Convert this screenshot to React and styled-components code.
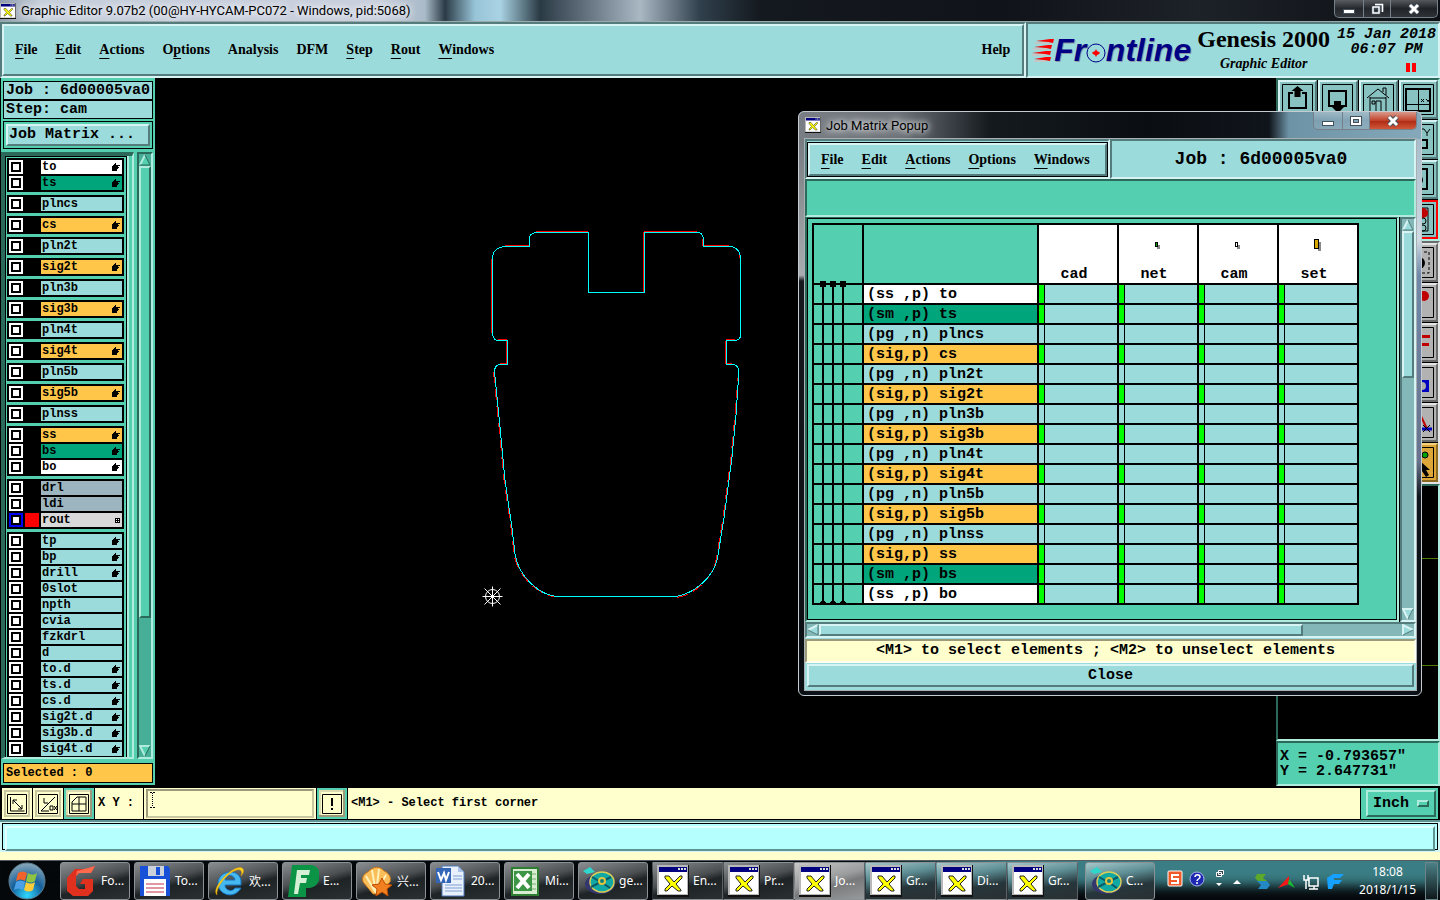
import { useState } from "react";
import styled, { createGlobalStyle, css } from "styled-components";

const GlobalStyle = createGlobalStyle`
  * {
    box-sizing: border-box;
  }
  body {
    margin: 0;
    background: #000;
    color: #000;
    font-family: "Liberation Mono", monospace;
    font-weight: bold;
  }
  button, input, select {
    font: inherit;
    color: inherit;
    margin: 0;
    padding: 0;
    border: none;
    border-radius: 0;
    background: none;
  }
`;

const aqua = "#9cdbdb";
const green = "#54cfb0";
const amber = "#ffc64a";
const mask = "#00a57b";
const cream = "#ffffce";

const tones = {
  aqua: ["#d8f3f3", "#557c7c"],
  green: ["#b0ecdd", "#2b6a5a"],
  cream: ["#fffff0", "#9c9a7b"],
  cyan: ["#e0ffff", "#5f9494"],
  gray: ["#e4e4e4", "#6b6b6b"],
  gold: ["#f5cf7c", "#8a6a20"],
  red: ["#ff0000", "#ff0000"],
};

const raised = (tone, size = 2) => css`
  border: ${size}px solid;
  border-color: ${tones[tone][0]} ${tones[tone][1]} ${tones[tone][1]} ${tones[tone][0]};
`;

const sunken = (tone, size = 2) => css`
  border: ${size}px solid;
  border-color: ${tones[tone][1]} ${tones[tone][0]} ${tones[tone][0]} ${tones[tone][1]};
`;

const layerGroups = [
  [["to", "#fff", "hand"], ["ts", mask, "hand"]],
  [["plncs", aqua]],
  [["cs", amber, "hand"]],
  [["pln2t", aqua]],
  [["sig2t", amber, "hand"]],
  [["pln3b", aqua]],
  [["sig3b", amber, "hand"]],
  [["pln4t", aqua]],
  [["sig4t", amber, "hand"]],
  [["pln5b", aqua]],
  [["sig5b", amber, "hand"]],
  [["plnss", aqua]],
  [["ss", amber, "hand"], ["bs", mask, "hand"], ["bo", "#fff", "hand"]],
  [["drl", "#9cb5bf"], ["ldi", "#9cb5bf"], ["rout", "#d9d9d9", "grid"]],
  [
    ["tp", aqua, "hand"],
    ["bp", aqua, "hand"],
    ["drill", aqua, "hand"],
    ["0slot", aqua],
    ["npth", aqua],
    ["cvia", aqua],
    ["fzkdrl", aqua],
    ["d", aqua],
    ["to.d", aqua, "hand"],
    ["ts.d", aqua, "hand"],
    ["cs.d", aqua, "hand"],
    ["sig2t.d", aqua, "hand"],
    ["sig3b.d", aqua, "hand"],
    ["sig4t.d", aqua, "hand"],
  ],
];

const matrixRows = [
  ["(ss ,p) to", "#fff", true],
  ["(sm ,p) ts", mask, true],
  ["(pg ,n) plncs", aqua, false],
  ["(sig,p) cs", amber, true],
  ["(pg ,n) pln2t", aqua, false],
  ["(sig,p) sig2t", amber, true],
  ["(pg ,n) pln3b", aqua, false],
  ["(sig,p) sig3b", amber, true],
  ["(pg ,n) pln4t", aqua, false],
  ["(sig,p) sig4t", amber, true],
  ["(pg ,n) pln5b", aqua, false],
  ["(sig,p) sig5b", amber, true],
  ["(pg ,n) plnss", aqua, false],
  ["(sig,p) ss", amber, true],
  ["(sm ,p) bs", mask, true],
  ["(ss ,p) bo", "#fff", true],
];

const steps = ["cad", "net", "cam", "set"];

const mainMenu = [
  ["", "F", "ile"],
  ["", "E", "dit"],
  ["", "A", "ctions"],
  ["O", "p", "tions"],
  ["Analysis", "", ""],
  ["DFM", "", ""],
  ["", "S", "tep"],
  ["", "R", "out"],
  ["", "W", "indows"],
];

const popupMenu = [
  ["", "F", "ile"],
  ["", "E", "dit"],
  ["", "A", "ctions"],
  ["", "O", "ptions"],
  ["", "W", "indows"],
];

/* ---------- icons ---------- */

const XIcon = ({ size }) => (
  <svg width={size} height={size} viewBox="0 0 32 32" aria-hidden="true">
    <rect width="32" height="32" fill="#111" />
    <rect width="31" height="30" fill="#b8b8b8" />
    <rect x="2" y="2" width="28" height="27" fill="#fff" />
    <rect x="2" y="2" width="28" height="5" fill="#000080" />
    <path d="M21 3h2v2h-2zM24 3h2v2h-2zM27 3h2v2h-2z" fill="#ddd" />
    <path d="M8 11h4l5 6 6-6h2v2l-6 6 5 6v1h-3l-6-5-5 5H8v-2l5-5-5-6z" fill="#ff0" stroke="#222" />
  </svg>
);

const HandIcon = () => (
  <svg width="8" height="8" viewBox="0 0 8 8" shapeRendering="crispEdges" aria-hidden="true">
    <path d="M3 0h1v2h4v1H6v1h1v1H6v1H5v2H0V3h1V2h1V1h1z" />
  </svg>
);

const GridIcon = () => (
  <svg width="5" height="5" viewBox="0 0 5 5" shapeRendering="crispEdges" aria-hidden="true">
    <path d="M0 0h5v5H0z" />
    <path d="M1 1h1v1H1zM3 1h1v1H3zM1 3h1v1H1zM3 3h1v1H3z" fill="#fff" />
  </svg>
);

const arrowShapes = {
  up: ["M6 1L11 11H1z", "M6 1L1 11", "M1 11H11L6 1"],
  down: ["M1 1H11L6 11z", "M6 11L1 1H11", "M11 1L6 11"],
  left: ["M1 6L11 1V11z", "M11 1L1 6", "M1 6L11 11V1"],
  right: ["M1 1L11 6L1 11z", "M1 11V1L11 6", "M11 6L1 11"],
};

const ScrollArrow = ({ dir, tone, fill }) => (
  <svg width="12" height="12" viewBox="0 0 12 12" aria-hidden="true">
    <path d={arrowShapes[dir][0]} fill={fill} />
    <path d={arrowShapes[dir][1]} fill="none" stroke={tones[tone][0]} strokeWidth="2" />
    <path d={arrowShapes[dir][2]} fill="none" stroke={tones[tone][1]} />
  </svg>
);

const SpeedLines = () => (
  <svg width="22" height="28" viewBox="0 0 22 28" aria-hidden="true">
    <path d="M4 5l14-2h4l-1 4-5-1zM2 11l14-2h4l-1 4-5-1zM0 17l14-2h5l-1 4-5-1zM2 23l12-2h5l-1 4-6-1z" fill="#f00" />
    <path d="M3 7h14M1 13h14M0 19h14M2 25h12" stroke="#e9b3b0" />
  </svg>
);

const WindowGlyph = ({ kind }) => (
  <svg width="14" height="12" viewBox="0 0 14 12" aria-hidden="true">
    {kind === "min" && <rect x="1.5" y="6.5" width="11" height="4" fill="#fff" stroke="#44505c" />}
    {kind === "max" && (
      <g fill="none">
        <rect x="3" y="3" width="8" height="6" stroke="#44505c" strokeWidth="4" />
        <rect x="3" y="3" width="8" height="6" stroke="#fff" strokeWidth="2" />
      </g>
    )}
    {kind === "restore" && (
      <g fill="none">
        <path d="M5 2h7v7M3 5h6v5H3z" stroke="#44505c" strokeWidth="3" />
        <path d="M5 1.500h7.500V9M3 4h6v6H3z" stroke="#fff" strokeWidth="1.500" />
      </g>
    )}
    {kind === "close" && (
      <g fill="none">
        <path d="M3 2l8 8M11 2l-8 8" stroke="#44505c" strokeWidth="5" />
        <path d="M3 2l8 8M11 2l-8 8" stroke="#fff" strokeWidth="3" />
      </g>
    )}
  </svg>
);

const toolArt = {
  board: (
    <>
      <path d="M11 9H7v15h17V9h-4" fill="none" stroke="#000" strokeWidth="2" />
      <path d="M15.500 2l6 5h-3v6h-6V7h-3z" />
    </>
  ),
  screen: (
    <>
      <path d="M7 7h17v15H7z" fill="none" stroke="#000" strokeWidth="2" />
      <path d="M12 17h7v6h3l-6 6-6-6h2z" />
    </>
  ),
  house: <path d="M4 14L15 5l11 9M7 13v15h16V13M7 14h16M13 28V17h5v11M9 17h3v3H9zM20 8V4h3v7" fill="none" stroke="#000" />,
  quad: (
    <>
      <path d="M3 5h24v22H3z" fill="none" stroke="#000" strokeWidth="2" />
      <path d="M15.500 5v22M3 20.500h24" stroke="#000" />
      <path d="M18 15l3 3M21 15l-3 3M23 15l2 2 2-2M25 17v1" fill="none" stroke="#000" />
    </>
  ),
  plug: (
    <>
      <path d="M18 5h3l3 4 3-4M24 9v3" fill="none" stroke="#000" />
      <path d="M10 16h14v8H10z" fill="none" stroke="#000" strokeWidth="2" />
    </>
  ),
  frame: (
    <>
      <path d="M6 5h18v20H6z" fill="none" stroke="#000" strokeWidth="2" />
      <circle cx="16" cy="16" r="4" />
    </>
  ),
  lights: (
    <>
      <path d="M10 4h15v23H10z" fill="none" stroke="#000" />
      <circle cx="20" cy="9" r="5" fill="#c00000" />
      <circle cx="20" cy="17" r="3" fill="none" stroke="#000" />
      <circle cx="20" cy="24" r="3" fill="none" stroke="#000" />
    </>
  ),
  dashed: (
    <>
      <path d="M6 5h20v21H6z" fill="none" stroke="#000" strokeDasharray="3 2" />
      <circle cx="16" cy="16" r="6" />
    </>
  ),
  dot: <circle cx="21" cy="9" r="5" fill="#c00000" />,
  bars: <path d="M12 8h15v3H12zM12 16h14v3H12z" fill="#c00000" />,
  box: (
    <>
      <path d="M14 13h12v12H14z" fill="#0000c0" />
      <circle cx="19" cy="19" r="4" fill="#aaa" />
    </>
  ),
  cross: (
    <>
      <path d="M16 5l8 17" stroke="#c00000" strokeWidth="2" />
      <path d="M12 22h17" stroke="#0000c0" strokeWidth="3" />
      <path d="M20 18l7 7M27 18l-7 7" stroke="#000" />
    </>
  ),
  pointer: (
    <>
      <circle cx="22" cy="8" r="3" fill="#00a000" stroke="#000" />
      <path d="M16 13l11 10h-4l3 5-3 2-4-6-3 3z" />
    </>
  ),
};

const ToolArt = ({ name }) => (
  <svg width="31" height="31" viewBox="0 0 31 31" aria-hidden="true">
    <path d="M.5 .5h30v30H.5z" fill="none" stroke="#000" />
    {toolArt[name]}
  </svg>
);

const promptArt = {
  corner: <path d="M3.500 3v14h14M6 6l9 9M6 10V6h4M15 11v4h-4" />,
  angle: <path d="M3 17L17 3M6 4v5h4M12 12h3v4h-3zM16 12l3 4M19 12l-3 4M3 17h8" />,
  grid: <path d="M8 3h9v14H3V8zM3 10h14M10 3v14" />,
  alert: <path d="M10 4v8M10 14v2" strokeWidth="2" />,
};

const PromptArt = ({ name }) => (
  <svg width="20" height="20" viewBox="0 0 20 20" fill="none" stroke="#000" aria-hidden="true">
    <path d="M.5 .5h19v19H.5z" />
    {promptArt[name]}
  </svg>
);

const appArt = {
  foxit: (
    <>
      <path d="M30 1l-4 7H14l-3 3v10l3 3h6v-5h-5l3-5h10v12l-5 5H8l-6-5V13l8-9h13z" fill="#e0301e" />
      <path d="M30 1l-4 7H14l-3 3 1-5z" fill="#ff6a4d" />
    </>
  ),
  floppy: (
    <>
      <path d="M1 1h28l2 3v27H1z" fill="#1850d8" />
      <path d="M9 1h16v10H9z" fill="#ccd2da" />
      <path d="M17 2h4v8h-4z" fill="#1850d8" />
      <path d="M5 14h22v17H5z" fill="#fff" />
      <path d="M7 19h18M7 23h18M7 27h18" stroke="#c3304a" />
    </>
  ),
  ie: (
    <>
      <path d="M28 20H12c0 6 8 7 10 3h6C21 35 5 30 5 18S25 2 28 15zM12 15h10c-1-6-9-6-10 0z" fill="#45b8f0" stroke="#1671bd" />
      <path d="M4 30C-3 24 20-1 29 3c3 2 1 6-1 8 1-3 1-5-1-6C20 2 2 21 4 30z" fill="#ffd320" stroke="#d89b00" strokeWidth=".5" />
    </>
  ),
  fp: (
    <>
      <path d="M5 0h20c12 2 10 22-3 23h-3v9H1z" fill="#0c9446" />
      <path d="M10 5h13l-1 5h-8v3h6l-1 5h-6l-2 11H7z" fill="#d6f0d6" />
    </>
  ),
  shell: (
    <>
      <path d="M2 17C0 9 6 8 8 6c5-5 11-5 15 0 3 1 8 5 6 11L18 29h-6z" fill="#f9bd5a" stroke="#c77418" />
      <path d="M15 28L5 11M15 28L11 5M15 28L18 4M15 28L25 10" stroke="#fff0b8" strokeWidth="2" />
      <path d="M21 13l3 6 7 1-5 4 1 7-6-4-6 4 1-7-5-4 7-1z" fill="#f08020" stroke="#c04c00" />
    </>
  ),
  word: (
    <>
      <path d="M7 1h16l6 6v24H7z" fill="#e8f0fb" stroke="#4f78b8" />
      <path d="M23 1v6h6z" fill="#a8c2e8" />
      <path d="M18 11h9M18 14h9M10 20h17M10 23h17M10 26h17" stroke="#7d9fd2" />
      <path d="M1 3h15v15H1z" fill="#3466b8" />
      <path d="M3 7l3 8 3-7 2 7 3-8" fill="none" stroke="#fff" strokeWidth="2" />
    </>
  ),
  excel: (
    <>
      <path d="M3 3h26v27H3z" fill="#d7ecd0" stroke="#2f7d32" strokeWidth="2" />
      <path d="M17 9h10M17 14h10M17 19h10M17 24h10" stroke="#78b070" />
      <path d="M5 6h18v20H5z" fill="#3c9645" />
      <path d="M8 9l12 14M20 9L8 23" stroke="#fff" strokeWidth="4" />
    </>
  ),
  genesis: (
    <>
      <ellipse cx="17" cy="19" rx="15" ry="10" fill="#34366e" />
      <ellipse cx="19" cy="17" rx="12" ry="10" fill="#12a8a4" stroke="#d9cf58" strokeWidth="1.500" />
      <path d="M9 12l9 5 10-5M8 22l10-5 9 6" stroke="#0a5a68" strokeWidth="2" fill="none" />
      <circle cx="19" cy="16" r="4" fill="#e4c63e" />
      <circle cx="19" cy="16" r="2" fill="#0c8080" />
      <path d="M0 6l7-4 5 5-8 2z" fill="#2fd6cc" />
    </>
  ),
};

const AppArt = ({ name }) =>
  name === "x" ? (
    <XIcon size={32} />
  ) : (
    <svg width="32" height="32" viewBox="0 0 32 32" aria-hidden="true">
      {appArt[name]}
    </svg>
  );

const StartOrb = () => (
  <svg width="38" height="38" viewBox="0 0 38 38" aria-hidden="true">
    <defs>
      <radialGradient id="orb" cx=".5" cy=".9" r=".9">
        <stop offset="0" stopColor="#2fd8ff" />
        <stop offset=".5" stopColor="#14609c" />
        <stop offset="1" stopColor="#8ba8b8" />
      </radialGradient>
    </defs>
    <circle cx="19" cy="19" r="18" fill="url(#orb)" stroke="#5b7c90" />
    <path d="M10 11c3-2 6-2 9 0l-2 8c-3-2-6-2-9 0z" fill="#f0642c" />
    <path d="M20 11c3 2 6 2 9 0l-2 8c-3 2-6 2-9 0z" fill="#8fc442" />
    <path d="M8 20c3-2 6-2 9 0l-2 8c-3-2-6-2-9 0z" fill="#4ba0e8" />
    <path d="M18 20c3 2 6 2 9 0l-2 8c-3 2-6 2-9 0z" fill="#fccb3a" />
  </svg>
);

const TrayIcons = () => (
  <svg width="180" height="24" viewBox="0 0 180 24" aria-hidden="true">
    <rect x="1" y="2" width="14" height="15" rx="1" fill="#f05a28" stroke="#fff" />
    <path d="M12 6H5v4h6v4H4" fill="none" stroke="#fff" strokeWidth="2" />
    <circle cx="30" cy="10" r="7" fill="#1c28b0" stroke="#aab2e8" />
    <path d="M28 8c0-3 5-3 5 0 0 2-3 2-3 4M30 13v2" fill="none" stroke="#fff" strokeWidth="1.500" />
    <path d="M51.500 1.500h5v4h-5zM49.500 3.500h5v4h-5z" fill="#345" stroke="#fff" />
    <path d="M49 14h6l-3 3zM66 15h8l-4-4z" fill="#fff" />
    <path d="M90 5h9l-3 4 4 3h-9l-3-3z" fill="#5da92a" />
    <path d="M90 12h10l3 4-3 4H91l3-4z" fill="#2488c4" />
    <path d="M111 19L122 7v8z" fill="#f01818" />
    <path d="M122 10l6 9-7-4z" fill="#18c030" />
    <path d="M142 9h9v8h-9zM147 17v3M142 20h9M137 6v5h4V6M139 11v9" fill="none" stroke="#fff" strokeWidth="1.500" />
    <path d="M160 9l6-4h11l-4 4h-6v2h8l-3 4h-5l-2 5h-4z" fill="#16a0ff" />
  </svg>
);

const IBeam = () => (
  <BeamMark width="5" height="16" viewBox="0 0 5 16" shapeRendering="crispEdges" aria-hidden="true">
    <path d="M0 .5h2M3 .5h2M0 15.500h2M3 15.500h2" stroke="#000" />
    <path d="M2.500 1v14" stroke="#000" strokeDasharray="1 1" />
  </BeamMark>
);

const outline =
  "M588.500 232.500H536Q529.500 233 529.500 239V246.500H504Q492.500 248 492.500 259V334Q493 340.500 499 340.500H507.500V364.500H500Q494.500 365 494.500 372L500 427L505 480L512 528L515 554C519 578 540 595 557 596.500H676C696 593 714 576 717.500 558L724 518L732 457L736 415L738.500 378V370Q738 364.500 732 364.500H726.500V340.500H735Q740.500 340 740.500 335V257Q739 246.500 729 246.500H703.500V239Q703 232.500 697 232.500H644.500V292.500H588.500Z";

const BoardOutline = () => (
  <svg width="100%" height="100%" fill="none" aria-label="Board profile">
    <g transform="translate(-155 -78)" shapeRendering="crispEdges">
      <path
        d="M536 231.500H588M505 245.500H529M491.500 259V333M498 339.500H507M506.500 341V364M500 363.500H507M644 231.500H697M643.500 232V292M702.500 239V246M704 245.500H729M725.500 341V364M726 339.500H735M727 363.500H732M739.500 258V254M740 332V338"
        stroke="#f00"
      />
      <path
        d="M493.500 372L499 427L504 480L511 528L514 554C518 578 539 595 556 597M677 597.500C697 594 713 577 716.500 558L723 518L731 457L735 415L738 378"
        stroke="#f00"
        strokeDasharray="11 6"
      />
      <path d={outline} stroke="#0ff" />
    </g>
    <g transform="translate(337.500 518.500)" stroke="#fff">
      <circle r="7" />
      <path d="M-10 0H10M0-10V10M-8-8L8 8M8-8L-8 8" />
    </g>
  </svg>
);

const DrillSpans = () => (
  <SpanOverlay width="30" height="324" viewBox="0 0 30 324" shapeRendering="crispEdges" aria-hidden="true">
    {[0, 10, 20].map((x) => (
      <path key={x} d={`M${x} 0h6v6h-6zM${x + 2} 6h2v316h-2zM${x + 1} 320h4v1h1v3h-6v-3h1z`} />
    ))}
  </SpanOverlay>
);

const StepMark = ({ step }) => (
  <svg width="10" height="14" viewBox="0 0 10 14" shapeRendering="crispEdges" aria-hidden="true">
    {(step === "net" || step === "cam") && (
      <>
        <path d="M4 7h3v4H4z" fill="#888" />
        <path d="M2 4h3v5H2z" />
        <path d="M3 5h1v3H3z" fill={step === "net" ? "#0a0" : "#fff"} />
      </>
    )}
    {step === "set" && (
      <>
        <path d="M5 4h3v9H5z" fill="#888" />
        <path d="M1 1h5v10H1z" />
        <path d="M2 2h3v8H2z" fill="#d9a800" />
      </>
    )}
  </svg>
);

/* ---------- pieces ---------- */

const Menu = ({ items }) => (
  <MenuList>
    {items.map(([before, key, after]) => (
      <MenuButton key={before + key + after} type="button">
        {before}
        {key && <u>{key}</u>}
        {after}
      </MenuButton>
    ))}
  </MenuList>
);

const WindowButtons = ({ active, middle }) => (
  <Controls>
    <ControlButton type="button" aria-label="Minimize" $width={28}>
      <WindowGlyph kind="min" />
    </ControlButton>
    <ControlButton type="button" aria-label="Maximize" $width={27}>
      <WindowGlyph kind={middle} />
    </ControlButton>
    <ControlButton type="button" aria-label="Close window" $width={47} $red={active}>
      <WindowGlyph kind="close" />
    </ControlButton>
  </Controls>
);

const Header = () => (
  <HeaderBar>
    <MenuFrame>
      <MenuInner>
        <Menu items={mainMenu} />
        <MenuButton type="button">Help</MenuButton>
      </MenuInner>
    </MenuFrame>
    <Brand>
      <Logo>
        <SpeedLines />
        <LogoText>
          Fr
          <LogoO>
            o
            <svg width="20" height="20" viewBox="0 0 20 20" aria-hidden="true">
              <circle cx="10" cy="10" r="9" fill={aqua} stroke="#000084" />
              <path d="M10 6l1 2 2 1 1 1-1 1-2 1-1 2-1-2-2-1-1-1 1-1 2-1z" fill="#f00" />
            </svg>
          </LogoO>
          ntline
        </LogoText>
      </Logo>
      <Product>
        <ProductName>Genesis 2000</ProductName>
        <ProductPart>Graphic Editor</ProductPart>
      </Product>
      <Stamp>
        <span>15 Jan 2018</span>
        <span>06:07 PM</span>
        <PauseMark />
      </Stamp>
    </Brand>
  </HeaderBar>
);

const Sidebar = () => {
  const [checked, setChecked] = useState([]);

  const toggle = (name) => {
    setChecked((prev) => (prev.includes(name) ? prev.filter((n) => n !== name) : [...prev, name]));
  };

  return (
    <SidePanel>
      <InfoBox>Job : 6d00005va0</InfoBox>
      <InfoBox>Step: cam</InfoBox>
      <MatrixButtonFrame>
        <MatrixButton type="button">Job Matrix ...</MatrixButton>
      </MatrixButtonFrame>
      <LayerArea>
        <LayerFrame>
          <LayerList>
            {layerGroups.map((group) => (
              <LayerGroup key={group[0][0]}>
                {group.map(([name, color, mark]) => (
                  <LayerRow key={name}>
                    <LayerCheck
                      type="checkbox"
                      checked={checked.includes(name)}
                      onChange={() => toggle(name)}
                      $work={name === "rout"}
                    />
                    <LayerSwatch $on={name === "rout"} />
                    <LayerName $color={color}>
                      {name}
                      {mark === "hand" && <HandIcon />}
                      {mark === "grid" && <GridIcon />}
                    </LayerName>
                  </LayerRow>
                ))}
              </LayerGroup>
            ))}
          </LayerList>
        </LayerFrame>
        <ScrollTrack $tone="green" $trough="#47ae97">
          <ScrollArrow dir="up" tone="green" fill="#54cfb0" />
          <ScrollRun>
            <ScrollThumb $tone="green" $color={green} $share={78} />
          </ScrollRun>
          <ScrollArrow dir="down" tone="green" fill="#54cfb0" />
        </ScrollTrack>
      </LayerArea>
      <SelectedBox>Selected : 0</SelectedBox>
    </SidePanel>
  );
};

const navTools = [
  "board", "screen", "house", "quad",
  "frame", "screen", "board", "plug",
  "screen", "board", "frame", "frame",
  "frame", "quad", "screen", "lights",
];

const editTools = [
  "dot", "bars", "box", "dashed",
  "box", "dashed", "bars", "dot",
  "dot", "box", "cross", "bars",
  "bars", "dot", "dashed", "box",
  "dashed", "box", "dot", "cross",
  "cross", "dot", "bars", "pointer",
];

const ToolColumn = () => (
  <ToolPanel>
    <ToolGrid $tone="green">
      {navTools.map((name, i) => (
        <ToolButton key={i} type="button" aria-label={name} $bg="#88c3c1" $tone={name === "lights" ? "red" : "aqua"}>
          <ToolArt name={name} />
        </ToolButton>
      ))}
    </ToolGrid>
    <ToolGrid $tone="gray">
      {editTools.map((name, i) => (
        <ToolButton
          key={i}
          type="button"
          aria-label={name}
          $bg={name === "pointer" ? "#dba53a" : "#b2b2b2"}
          $tone={name === "pointer" ? "gold" : "gray"}
        >
          <ToolArt name={name} />
        </ToolButton>
      ))}
    </ToolGrid>
    <Overview>
      <svg width="100%" height="100%" stroke="#4a7a00" aria-hidden="true">
        <path d="M0 72.500H170M0 179.500H170" />
      </svg>
    </Overview>
    <Coordinates>
      <span>X = -0.793657"</span>
      <span>Y = 2.647731"</span>
    </Coordinates>
  </ToolPanel>
);

const MatrixPopup = () => (
  <PopupWindow>
    <PopupTitle>
      <XIcon size={16} />
      <GlowText>Job Matrix Popup</GlowText>
      <WindowButtons active middle="max" />
    </PopupTitle>
    <PopupContent>
      <PopupTop>
        <PopupMenuFrame>
          <PopupMenuInner>
            <Menu items={popupMenu} />
          </PopupMenuInner>
        </PopupMenuFrame>
        <PopupJob>Job : 6d00005va0</PopupJob>
      </PopupTop>
      <PopupStrip />
      <MatrixArea>
        <MatrixView>
          <MatrixInner>
            <MatrixTable>
              <thead>
                <tr>
                  <HeadCell $width={48} />
                  <HeadCell $width={173} />
                  {steps.map((step) => (
                    <HeadCell key={step} $width={78} $white scope="col">
                      <StepHead>
                        <StepMark step={step} />
                        <StepName>{step}</StepName>
                      </StepHead>
                    </HeadCell>
                  ))}
                </tr>
              </thead>
              <tbody>
                {matrixRows.map(([label, color, on]) => (
                  <tr key={label}>
                    <SpanCell />
                    <LayerCell $color={color} scope="row">
                      {label}
                    </LayerCell>
                    {steps.map((step) => (
                      <DataCell key={step} $on={on} />
                    ))}
                  </tr>
                ))}
              </tbody>
            </MatrixTable>
            <DrillSpans />
          </MatrixInner>
        </MatrixView>
        <ScrollTrack $tone="aqua" $trough="#84b8b8">
          <ScrollArrow dir="up" tone="aqua" fill={aqua} />
          <ScrollRun>
            <ScrollThumb $tone="aqua" $color={aqua} $share={39} />
          </ScrollRun>
          <ScrollArrow dir="down" tone="aqua" fill={aqua} />
        </ScrollTrack>
      </MatrixArea>
      <ScrollTrack $tone="aqua" $trough="#84b8b8" $across>
        <ScrollArrow dir="left" tone="aqua" fill={aqua} />
        <ScrollRun>
          <ScrollThumb $tone="aqua" $color={aqua} $share={83} $across />
        </ScrollRun>
        <ScrollArrow dir="right" tone="aqua" fill={aqua} />
      </ScrollTrack>
      <PopupMessage>&lt;M1&gt; to select elements ; &lt;M2&gt; to unselect elements</PopupMessage>
      <CloseFrame>
        <CloseButton type="button">Close</CloseButton>
      </CloseFrame>
    </PopupContent>
  </PopupWindow>
);

const PromptBar = () => {
  const [xy, setXy] = useState("");

  return (
    <Prompt>
      <PromptButton type="button" aria-label="Snap to corner">
        <PromptArt name="corner" />
      </PromptButton>
      <PromptButton type="button" aria-label="Angle">
        <PromptArt name="angle" />
      </PromptButton>
      <PromptButton type="button" aria-label="Grid" $active>
        <PromptArt name="grid" />
      </PromptButton>
      <XyLabel htmlFor="xy">X Y :</XyLabel>
      <XyField>
        <XyInput id="xy" type="text" value={xy} onChange={(e) => setXy(e.target.value)} />
        <IBeam />
      </XyField>
      <PromptButton type="button" aria-label="Alert" $active>
        <PromptArt name="alert" />
      </PromptButton>
      <PromptText>&lt;M1&gt; - Select first corner</PromptText>
      <UnitFrame>
        <UnitBox>
          <UnitSelect aria-label="Units" defaultValue="Inch">
            <option>Inch</option>
            <option>mm</option>
          </UnitSelect>
          <UnitKnob />
        </UnitBox>
      </UnitFrame>
    </Prompt>
  );
};

const pinned = [
  ["foxit", "Fo..."],
  ["floppy", "To..."],
  ["ie", "欢..."],
  ["fp", "E..."],
  ["shell", "兴..."],
  ["word", "20..."],
  ["excel", "Mi..."],
  ["genesis", "ge..."],
];

const grouped = [
  ["x", "En...", "dark"],
  ["x", "Pr...", "dark"],
  ["x", "Jo...", "active"],
  ["x", "Gr...", "teal"],
  ["x", "Di...", "teal"],
  ["x", "Gr...", "teal"],
];

const Taskbar = () => (
  <TaskStrip>
    <StartButton type="button" aria-label="Start">
      <StartOrb />
    </StartButton>
    <TaskButtons>
      {pinned.map(([icon, text]) => (
        <TaskButton key={icon} type="button" $look="dark">
          <AppArt name={icon} />
          {text}
        </TaskButton>
      ))}
      <TaskGroup>
        {grouped.map(([icon, text, look], i) => (
          <TaskButton key={i} type="button" $look={look}>
            <AppArt name={icon} />
            {text}
          </TaskButton>
        ))}
      </TaskGroup>
      <TaskButton type="button" $look="teal">
        <AppArt name="genesis" />
        C...
      </TaskButton>
    </TaskButtons>
    <TrayIcons />
    <Clock>
      <span>18:08</span>
      <span>2018/1/15</span>
    </Clock>
    <ShowDesktop type="button" aria-label="Show desktop" />
  </TaskStrip>
);

export default function App() {
  return (
    <Page>
      <GlobalStyle />
      <TitleBar>
        <XIcon size={16} />
        <GlowText>Graphic Editor 9.07b2 (00@HY-HYCAM-PC072 - Windows, pid:5068)</GlowText>
        <WindowButtons middle="restore" />
      </TitleBar>
      <Header />
      <Workspace>
        <Sidebar />
        <Canvas>
          <BoardOutline />
        </Canvas>
        <ToolColumn />
        <MatrixPopup />
      </Workspace>
      <PromptBar />
      <MessageBar>
        <MessageInner />
      </MessageBar>
      <Taskbar />
    </Page>
  );
}

/* ---------- page ---------- */

const Page = styled.div`
  display: flex;
  flex-direction: column;
  height: 100vh;
  overflow: hidden;
`;

const TitleBar = styled.header`
  display: flex;
  align-items: center;
  gap: 5px;
  height: 22px;
  flex: none;
  padding-right: 2px;
  border-bottom: 1px solid #9aa;
  background: linear-gradient(
    to right,
    #8f9cab 0,
    #c5cedb 40px,
    #c9cfdd 380px,
    #a9bac8 425px,
    #2b3b46 445px,
    #98c4d8 475px,
    #a9d3e4 500px,
    #2a3a44 540px,
    #5c6a78 580px,
    #aab8c4 640px,
    #30404c 700px,
    #14191f 760px,
    #10141a 1000px,
    #1d2228 1200px,
    #0b0f14 100%
  );
`;

const GlowText = styled.span`
  flex: 1;
  font: 13px Roboto, "Noto Sans", sans-serif;
  text-shadow: 0 0 6px #fff, 0 0 10px #fff;
  color: #000;
`;

const Controls = styled.div`
  display: flex;
  align-self: flex-start;
  border: 1px solid #76808a;
  border-top: none;
  border-radius: 0 0 5px 5px;
  overflow: hidden;
`;

const ControlButton = styled.button`
  display: flex;
  align-items: center;
  justify-content: center;
  width: ${(props) => props.$width}px;
  height: 17px;
  background: ${(props) =>
    props.$red
      ? "linear-gradient(#d99a8c, #c2432c 50%, #b02c14 55%, #d0583a)"
      : "linear-gradient(rgba(255, 255, 255, 0.3), rgba(255, 255, 255, 0.08) 50%, rgba(255, 255, 255, 0.14))"};

  & + & {
    border-left: 1px solid #76808a;
  }
`;

/* ---------- header ---------- */

const HeaderBar = styled.div`
  display: flex;
  height: 56px;
  flex: none;
  background: ${aqua};
`;

const MenuFrame = styled.nav`
  flex: 1;
  ${sunken("aqua")}
`;

const MenuInner = styled.div`
  display: flex;
  align-items: center;
  justify-content: space-between;
  height: 100%;
  padding: 0 12px 0 11px;
  ${raised("aqua")}
`;

const MenuList = styled.div`
  display: flex;
  gap: 18px;
`;

const MenuButton = styled.button`
  font: bold 14px "Liberation Serif", serif;

  u {
    text-underline-offset: 4px;
    text-decoration-skip-ink: none;
  }
`;

const Brand = styled.div`
  display: flex;
  align-items: center;
  gap: 5px;
  padding-left: 4px;
  ${sunken("aqua")}
`;

const Logo = styled.div`
  display: flex;
  align-items: center;
  width: 160px;
`;

const LogoText = styled.span`
  font: italic bold 32px/32px "Liberation Sans", sans-serif;
  color: #000084;
  text-shadow: 1px 1px 0 #8f9aa8;
`;

const LogoO = styled.span`
  position: relative;
  color: transparent;
  text-shadow: none;

  svg {
    position: absolute;
    left: 0;
    bottom: 5px;
  }
`;

const Product = styled.div`
  display: flex;
  flex-direction: column;
  align-items: center;
  font-family: "Liberation Serif", serif;
`;

const ProductName = styled.span`
  font-size: 24px;
  line-height: 28px;
`;

const ProductPart = styled.span`
  font-size: 14px;
  line-height: 22px;
  font-style: italic;
`;

const Stamp = styled.div`
  display: flex;
  flex-direction: column;
  align-items: center;
  align-self: flex-start;
  font-size: 15px;
  line-height: 15px;
  font-style: italic;
  padding: 3px 2px 0;
`;

const PauseMark = styled.span`
  align-self: flex-end;
  width: 10px;
  height: 9px;
  margin: 6px 20px 0 0;
  border: solid #f00;
  border-width: 0 4px;
`;

/* ---------- workspace ---------- */

const Workspace = styled.main`
  position: relative;
  display: flex;
  flex: 1;
  min-height: 0;
`;

const Canvas = styled.section`
  flex: 1;
  min-width: 0;
  background: #000;

  svg {
    display: block;
  }
`;

const SidePanel = styled.aside`
  display: flex;
  flex-direction: column;
  width: 155px;
  margin-bottom: 1px;
  padding: 3px 2px 2px;
  border-left: 1px solid #000;
  background: ${green};
`;

const InfoBox = styled.div`
  flex: none;
  height: 19px;
  padding-left: 2px;
  border: 1px solid #000;
  background: ${aqua};
  font-size: 15px;
  line-height: 18px;
  white-space: nowrap;
`;

const MatrixButtonFrame = styled.div`
  flex: none;
  margin: 2px 0 3px;
  padding: 2px;
  border: 1px solid #000;
`;

const MatrixButton = styled.button`
  width: 100%;
  height: 22px;
  padding-left: 1px;
  background: ${aqua};
  font-size: 15px;
  line-height: 18px;
  text-align: left;
  ${raised("aqua")}
`;

const LayerArea = styled.div`
  display: flex;
  justify-content: space-between;
  flex: 1;
  min-height: 0;
  margin-left: -2px;
`;

const LayerFrame = styled.div`
  display: flex;
  width: 133px;
  padding-right: 3px;
  overflow: hidden;
  border: solid;
  border-width: 4px 2px 2px 4px;
  border-color: #2b6a5a #b0ecdd #b0ecdd #2b6a5a;
`;

const LayerList = styled.div`
  display: flex;
  flex-direction: column;
  gap: 3px;
  width: 122px;
  flex: none;
  padding: 1px 2px 0 1px;
  overflow: hidden;
  border: 1px solid #000;
  border-bottom: none;
  box-shadow: 2px 0 0 #b0ecdd;
`;

const LayerGroup = styled.div`
  display: flex;
  flex-direction: column;
  flex: none;
  gap: 2px;
  padding: 2px;
  background: #000;
`;

const LayerRow = styled.label`
  display: flex;
  gap: 2px;
  height: 14px;
`;

const LayerCheck = styled.input`
  appearance: none;
  flex: none;
  width: 14px;
  height: 14px;
  border: 2px solid ${(props) => (props.$work ? "#00f" : "#fff")};
  background: #fff;
  box-shadow: inset 0 0 0 2px #000;

  &:checked {
    background: #00f;
  }
`;

const LayerSwatch = styled.span`
  width: 14px;
  background: ${(props) => (props.$on ? "#f00" : "#000")};
`;

const LayerName = styled.span`
  display: flex;
  align-items: center;
  justify-content: space-between;
  flex: 1;
  padding: 0 2px 0 1px;
  background: ${(props) => props.$color};
  font-size: 12px;
  line-height: 14px;
`;

const ScrollTrack = styled.div`
  display: flex;
  flex: none;
  flex-direction: ${(props) => (props.$across ? "row" : "column")};
  align-items: stretch;
  ${(props) => (props.$across ? "height: 16px;" : "width: 16px;")}
  background: ${(props) => props.$trough};
  ${(props) => sunken(props.$tone)}

  > svg {
    flex: none;
  }
`;

const ScrollRun = styled.div`
  flex: 1;
`;

const ScrollThumb = styled.div`
  ${(props) => (props.$across ? "height: 12px; width" : "width: 12px; height")}: ${(props) => props.$share}%;
  background: ${(props) => props.$color};
  ${(props) => raised(props.$tone)}
`;

const SelectedBox = styled.div`
  flex: none;
  height: 20px;
  margin-top: 4px;
  padding-left: 2px;
  border: 1px solid #000;
  background: ${amber};
  font-size: 12px;
  line-height: 19px;
`;

const ToolPanel = styled.aside`
  display: flex;
  flex-direction: column;
  flex: none;
  width: 164px;
  background: ${green};
`;

const ToolGrid = styled.div`
  display: grid;
  grid-template-columns: repeat(4, 1fr);
  grid-auto-rows: 39px;
  gap: 1px;
  background: #000;
  ${(props) => sunken(props.$tone)}
`;

const ToolButton = styled.button`
  display: flex;
  align-items: center;
  justify-content: center;
  overflow: hidden;
  background: ${(props) => props.$bg};
  ${(props) => raised(props.$tone)}
`;

const Overview = styled.div`
  flex: 1;
  min-height: 0;
  background: #000;
  ${sunken("green")}

  svg {
    display: block;
  }
`;

const Coordinates = styled.div`
  display: flex;
  flex-direction: column;
  height: 45px;
  padding: 6px 2px;
  font-size: 15px;
  line-height: 15px;
  ${sunken("green")}
`;

/* ---------- matrix popup ---------- */

const PopupWindow = styled.section`
  position: absolute;
  top: 33px;
  right: 18px;
  width: 624px;
  padding: 0 4px 4px 5px;
  border: 1px solid #c4ccd2;
  border-radius: 6px;
  background: linear-gradient(
      to right,
      rgba(120, 126, 132, 1) 0,
      rgba(120, 126, 132, 0.9) 100px,
      rgba(20, 26, 30, 1) 190px,
      #0a0e13 350px,
      #10151b 470px,
      #6d93a6 490px,
      #85a9ba 100%
    )
    top / 100% 27px no-repeat,
    linear-gradient(#9db5c5, #d0dae2 22%, #7088a8 28%, #68738e 60%, #11161c 66%, #0b0f14) right / 6px 100% no-repeat,
    linear-gradient(#6c7278, #a9adb0 28%, #15181c 29%, #0b0f14) left / 6px 100% no-repeat,
    #0d1218;
`;

const PopupTitle = styled.header`
  display: flex;
  align-items: center;
  gap: 5px;
  height: 26px;
  padding-left: 1px;
`;

const PopupContent = styled.div`
  display: flex;
  flex-direction: column;
  border: 1px solid #a8b0b4;
  background: ${aqua};
`;

const PopupTop = styled.div`
  display: flex;
  height: 40px;
`;

const PopupMenuFrame = styled.nav`
  width: 305px;
  padding-top: 1px;
  ${sunken("aqua")}
`;

const PopupMenuInner = styled.div`
  display: flex;
  align-items: center;
  height: 35px;
  padding-left: 11px;
  outline: 1px solid #000;
  outline-offset: -1px;
  ${raised("aqua", 3)}
`;

const PopupJob = styled.div`
  flex: 1;
  font-size: 18px;
  line-height: 36px;
  text-align: center;
  padding-right: 4px;
  ${sunken("aqua")}
`;

const PopupStrip = styled.div`
  height: 38px;
  background: ${green};
  ${sunken("green")}
`;

const MatrixArea = styled.div`
  display: flex;
  justify-content: space-between;
  background: #000;
`;

const MatrixView = styled.div`
  flex: 1;
  margin-right: 1px;
  background: ${green};
  ${sunken("green")}
  border-top-width: 1px;
`;

const MatrixInner = styled.div`
  position: relative;
  padding: 4px 4px 14px;
  border: 1px solid #000;
`;

const MatrixTable = styled.table`
  border-spacing: 2px;
  background: #000;
  font-size: 15px;
  line-height: 16px;
`;

const HeadCell = styled.th`
  width: ${(props) => props.$width}px;
  min-width: ${(props) => props.$width}px;
  height: 58px;
  padding: 0;
  background: ${(props) => (props.$white ? "#fff" : green)};
`;

const StepHead = styled.div`
  display: flex;
  flex-direction: column;
  align-items: center;
  justify-content: flex-end;
  gap: 15px;
  height: 58px;
`;

const StepName = styled.span`
  padding-right: 8px;
`;

const SpanCell = styled.td`
  height: 18px;
  padding: 0;
  background: ${green};
`;

const LayerCell = styled.th`
  padding: 2px 0 0 3px;
  background: ${(props) => props.$color};
  text-align: left;
  white-space: pre;
`;

const DataCell = styled.td`
  padding: 0;
  background: linear-gradient(to right, ${(props) => (props.$on ? "#0f0" : aqua)} 5px, #000 5px 6px, ${aqua} 6px);
`;

const SpanOverlay = styled.svg`
  position: absolute;
  left: 12px;
  top: 62px;
`;

const PopupMessage = styled.div`
  height: 24px;
  margin-top: 1px;
  padding-right: 10px;
  background: ${cream};
  font-size: 15px;
  line-height: 20px;
  text-align: center;
  ${sunken("cream")}
`;

const CloseFrame = styled.div`
  padding: 1px 2px 3px;
`;

const CloseButton = styled.button`
  width: 100%;
  height: 23px;
  font-size: 15px;
  line-height: 17px;
  ${raised("aqua")}
`;

/* ---------- prompt and message bars ---------- */

const Prompt = styled.form`
  display: flex;
  gap: 1px;
  flex: none;
  height: 34px;
  padding: 2px 2px 1px;
  background: #000;
`;

const PromptButton = styled.button`
  display: flex;
  align-items: center;
  justify-content: center;
  width: 30px;
  background: ${cream};
  ${(props) =>
    props.$active
      ? css`
          border: 2px solid ${green};
          box-shadow: inset -2px -2px 0 #9c9a7b, inset 2px 2px 0 #dcdab0;
        `
      : css`
          border: 2px solid ${cream};
          box-shadow: inset 0 0 0 2px #c9c7a0;
        `}
`;

const XyLabel = styled.label`
  width: 48px;
  padding-left: 3px;
  background: ${cream};
  font-size: 12px;
  line-height: 31px;
  white-space: nowrap;
`;

const XyField = styled.div`
  position: relative;
  display: flex;
  width: 172px;
  padding: 1px 2px;
  background: ${cream};
`;

const XyInput = styled.input`
  width: 100%;
  padding-left: 4px;
  background: ${cream};
  font-size: 12px;
  border: 2px solid;
  border-color: #9c9a7b #c9c7a0 #c9c7a0 #9c9a7b;
`;

const BeamMark = styled.svg`
  position: absolute;
  left: 6px;
  top: 4px;
`;

const PromptText = styled.div`
  flex: 1;
  padding-left: 3px;
  background: ${cream};
  font-size: 12px;
  line-height: 30px;
`;

const UnitFrame = styled.div`
  width: 77px;
  padding: 2px 2px 2px 5px;
  background: ${green};
`;

const UnitBox = styled.div`
  display: flex;
  align-items: center;
  justify-content: space-between;
  height: 27px;
  padding: 0 5px;
  ${raised("green")}
`;

const UnitSelect = styled.select`
  appearance: none;
  font-size: 15px;
`;

const UnitKnob = styled.span`
  width: 12px;
  height: 7px;
  ${raised("green")}
`;

const MessageBar = styled.div`
  flex: none;
  height: 40px;
  padding: 1px 2px 0;
  border-top: 2px solid #5f9494;
  border-bottom: 8px solid ${cream};
  background: #d2f6f6;
`;

const MessageInner = styled.div`
  height: 27px;
  border: 1px solid #000;
  background: #b5ffff;

  &::before {
    content: "";
    display: block;
    height: 21px;
    margin: 2px;
    ${raised("cyan")}
  }
`;

/* ---------- taskbar ---------- */

const TaskStrip = styled.footer`
  display: flex;
  align-items: center;
  flex: none;
  height: 40px;
  padding-right: 2px;
  border-top: 1px solid #555b60;
  background: linear-gradient(to right, #05080a 0, #05080a 860px, #3a7d84 1000px, #3a7d84 100%);
  box-shadow: inset 0 -18px 12px -4px #06090c;
  color: #fff;
  font: 12px "Noto Sans", "Noto Sans CJK SC", sans-serif;
`;

const StartButton = styled.button`
  width: 60px;
  padding: 0 0 0 8px;
  text-align: left;

  svg {
    display: block;
  }
`;

const TaskButtons = styled.div`
  display: flex;
  gap: 4px;
  flex: 1;
`;

const looks = {
  dark: "linear-gradient(165deg, #8b8e90 0, #4b4f52 45%, #1e2326 60%, #2b3033 100%)",
  active: "linear-gradient(165deg, #c9c9c9 0, #9b9c9d 45%, #77797b 60%, #98999a 100%)",
  teal: "linear-gradient(170deg, #a6c8cb 0, #5d8e94 35%, #26363b 65%, #2a3033 100%)",
};

const TaskButton = styled.button`
  display: flex;
  align-items: center;
  gap: 4px;
  width: 70px;
  height: 38px;
  padding-left: 4px;
  overflow: hidden;
  border: 1px solid #8b9194;
  border-radius: 3px;
  background: ${(props) => looks[props.$look]};
  white-space: nowrap;

  svg {
    flex: none;
  }
`;

const TaskGroup = styled.div`
  display: flex;
  padding-right: 3px;

  ${TaskButton} {
    width: 71px;
    border-left-color: transparent;
    border-right-color: #5b6164;
    border-radius: 0;
  }
`;

const Clock = styled.time`
  display: flex;
  flex-direction: column;
  align-items: center;
  margin: 0 9px 0 12px;
  line-height: 18px;
`;

const ShowDesktop = styled.button`
  width: 13px;
  height: 38px;
  border: 1px solid #6b8488;
  background: linear-gradient(#4a8086, #10181b);
`;
